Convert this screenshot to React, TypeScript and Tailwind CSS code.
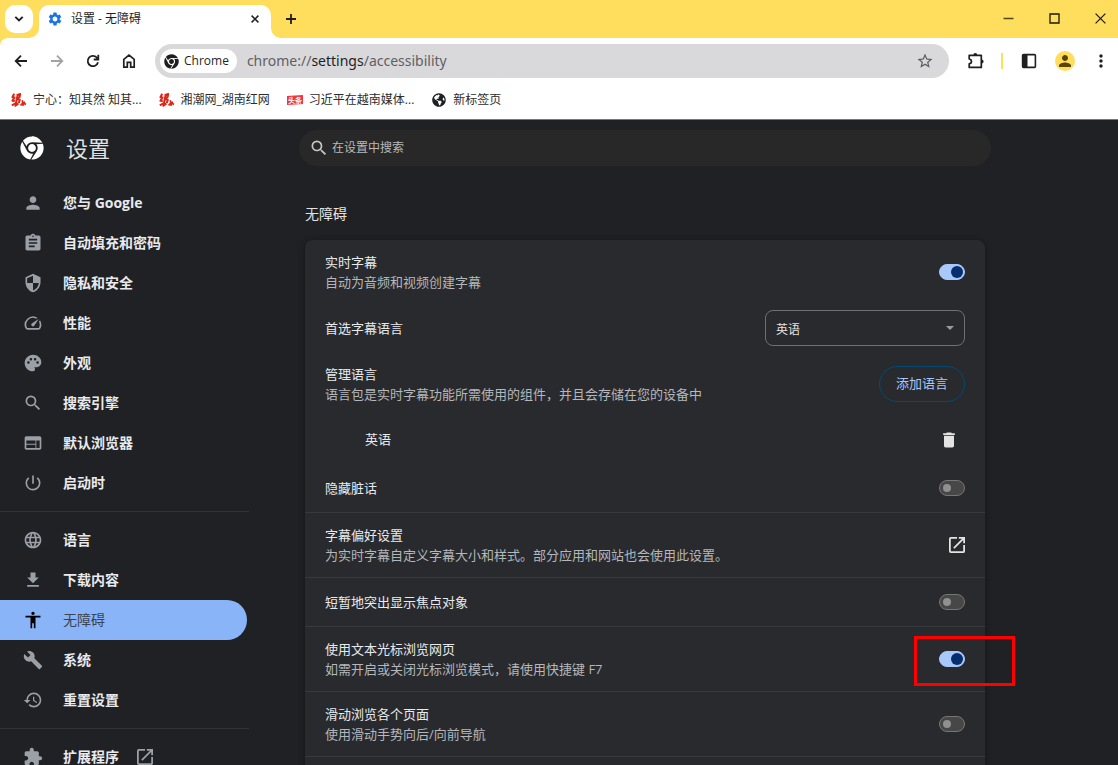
import type { ReactNode } from 'react';
import type { IconType } from 'react-icons';
import { FaChrome, FaGlobeAmericas } from 'react-icons/fa';
import {
  MdAccessibility,
  MdAssignment,
  MdBuild,
  MdDelete,
  MdExtension,
  MdFileDownload,
  MdHistory,
  MdLanguage,
  MdMoreVert,
  MdPalette,
  MdPerson,
  MdPowerSettingsNew,
  MdSearch,
  MdSecurity,
  MdSettings,
  MdSpeed,
  MdStarBorder,
  MdWeb,
} from 'react-icons/md';

type NavItem = { label: string; icon: IconType; active?: boolean; external?: boolean };

const navGroups: NavItem[][] = [
  [
    { label: '您与 Google', icon: MdPerson },
    { label: '自动填充和密码', icon: MdAssignment },
    { label: '隐私和安全', icon: MdSecurity },
    { label: '性能', icon: MdSpeed },
    { label: '外观', icon: MdPalette },
    { label: '搜索引擎', icon: MdSearch },
    { label: '默认浏览器', icon: MdWeb },
    { label: '启动时', icon: MdPowerSettingsNew },
  ],
  [
    { label: '语言', icon: MdLanguage },
    { label: '下载内容', icon: MdFileDownload },
    { label: '无障碍', icon: MdAccessibility, active: true },
    { label: '系统', icon: MdBuild },
    { label: '重置设置', icon: MdHistory },
  ],
  [{ label: '扩展程序', icon: MdExtension, external: true }],
];

function LaunchIcon({ className }: { className: string }) {
  return (
    <svg viewBox="3 3 18 18" className={className} fill="currentColor" aria-hidden="true">
      <path d="M19 19H5V5h7V3H5a2 2 0 0 0-2 2v14a2 2 0 0 0 2 2h14c1.1 0 2-.9 2-2v-7h-2v7zM14 3v2h3.590l-9.830 9.830 1.410 1.410L19 6.410V10h2V3h-7z" />
    </svg>
  );
}

function RedNetIcon() {
  return (
    <svg viewBox="0 0 16 14" className="h-3.5 w-4" fill="none" stroke="#dd2618" strokeLinejoin="round" aria-hidden="true">
      <path d="M3.200 .8 1.400 4.200l2.200.2L1.400 7.800l2.400.2M.8 12.400l3.600-2" strokeWidth="2" />
      <path d="M5.600 2.200 9.200 1 8.600 4 6 6.200l2.800.6-1 3.200M6.600 2.200 4.400 12.800l3-2.400" strokeWidth="2" />
      <path d="M9.600 12.600l1.600-2.200M11.200 7.200l.6 2.800 2.200-1M11.800 10l3.200 1.400M11.800 10l.4 2.800" strokeWidth="1.700" />
    </svg>
  );
}

function TabStrip() {
  return (
    <div className="flex h-[38px] items-start bg-[#ffdd5d] pt-[5px] text-[#1f1f1f]">
      <button aria-label="搜索标签页" className="ml-[5px] flex h-7 w-7 items-center justify-center rounded-[10px] bg-white">
        <svg viewBox="0 0 10 6" className="h-1.5 w-2.5" fill="none" stroke="currentColor" strokeWidth="1.900">
          <path d="M1.300 .8 5 4.500 8.700 .8" />
        </svg>
      </button>
      <div className="relative ml-1.5 flex h-[33px] w-[232px] items-center rounded-t-[10px] bg-white pr-2.5 pb-1.5 pl-2">
        <svg viewBox="0 0 10 10" className="absolute bottom-0 -left-2.5 size-2.5" fill="#fff">
          <path d="M10 0v10H0A10 10 0 0 0 10 0z" />
        </svg>
        <svg viewBox="0 0 10 10" className="absolute -right-2.5 bottom-0 size-2.5" fill="#fff">
          <path d="M0 0v10h10A10 10 0 0 1 0 0z" />
        </svg>
        <MdSettings className="size-4 text-[#1a73e8]" />
        <span className="ml-2 flex-1 text-xs">设置 - 无障碍</span>
        <button aria-label="关闭标签页" className="p-0.5">
          <svg viewBox="0 0 8 8" className="size-2" stroke="currentColor" strokeWidth="1.500">
            <path d="M.6 .6l6.800 6.800M7.400 .6.6 7.400" />
          </svg>
        </button>
      </div>
      <button aria-label="新标签页" className="ml-[14px] flex h-7 items-center">
        <svg viewBox="0 0 12 12" className="size-3" stroke="currentColor" strokeWidth="1.800">
          <path d="M6 1v10M1 6h10" />
        </svg>
      </button>
      <div className="ml-auto flex h-[26px] items-center gap-[35px] pr-3">
        <button aria-label="最小化">
          <svg viewBox="0 0 11 11" className="size-[11px]" stroke="#4f461f" strokeWidth="1.500">
            <path d="M.5 5.500h10" />
          </svg>
        </button>
        <button aria-label="最大化">
          <svg viewBox="0 0 11 11" className="size-[11px]" fill="none" stroke="#1a1708" strokeWidth="1.300">
            <path d="M1 1h9v9H1z" />
          </svg>
        </button>
        <button aria-label="关闭">
          <svg viewBox="0 0 11 11" className="size-[11px]" stroke="#1a1708" strokeWidth="1.200">
            <path d="M.6 .6l9.800 9.800M10.400 .6.6 10.400" />
          </svg>
        </button>
      </div>
    </div>
  );
}

function Toolbar() {
  return (
    <div className="flex h-[46px] items-center pr-[7px] pl-[13px] text-[#1f1f1f]">
      <div className="flex gap-5">
        <button aria-label="后退">
          <svg viewBox="0 0 16 16" className="size-4" fill="none" stroke="currentColor" strokeWidth="1.800">
            <path d="M14 8H3M8 2.700 2.700 8 8 13.300" />
          </svg>
        </button>
        <button aria-label="前进" disabled className="text-[#a3a3a3]">
          <svg viewBox="0 0 16 16" className="size-4" fill="none" stroke="currentColor" strokeWidth="1.800">
            <path d="M2 8h11M8 2.700 13.300 8 8 13.300" />
          </svg>
        </button>
        <button aria-label="重新加载">
          <svg viewBox="0 0 16 16" className="size-4" fill="none" stroke="currentColor" strokeWidth="1.800">
            <path d="M13 9.200A5.200 5.200 0 1 1 12.200 5L13.200 6.200M13.300 1.800v4.700H8.700" />
          </svg>
        </button>
        <button aria-label="主页">
          <svg viewBox="0 0 16 16" className="size-4" fill="none" stroke="currentColor" strokeWidth="1.700">
            <path d="M2.800 6.300 8 2.200l5.200 4.100v7.900H9.700V9.300H6.300v4.900H2.800z" />
          </svg>
        </button>
      </div>
      <div className="ml-[18px] flex h-[34px] flex-1 items-center rounded-full bg-[#d9d9db] pr-[15px] pl-[5px]">
        <span className="flex h-6 items-center gap-[5px] rounded-full bg-white pr-2 pl-1 text-xs">
          <FaChrome className="size-[15px]" />
          Chrome
        </span>
        <p className="ml-2.5 flex-1 font-['Noto_Sans',sans-serif] text-sm text-[#5f6063]">
          chrome://<span className="text-[#1f1f1f]">settings</span>/accessibility
        </p>
        <button aria-label="为此标签页添加书签">
          <MdStarBorder className="size-[18px] text-[#5a5b5e]" />
        </button>
      </div>
      <div className="ml-[18px] flex items-center">
        <button aria-label="扩展程序">
          <svg viewBox="0 0 18 18" className="size-[18px]" fill="none" stroke="currentColor" strokeWidth="1.700" strokeLinejoin="round">
            <path d="M2.200 3.300H14.300V15.400H2.200V11.800C5.200 11.200 5.200 7.600 2.200 7z" />
            <path d="M6.300 3a2 2 0 0 1 4 0zM14.600 7.500a2 2 0 0 1 0 4z" fill="currentColor" stroke="none" />
          </svg>
        </button>
        <span className="ml-4 h-4 w-0.5 bg-[#ffdd5d]" />
        <button aria-label="侧边栏" className="ml-[18px]">
          <svg viewBox="0 0 16 16" className="size-4" fill="none" stroke="currentColor" strokeWidth="1.600">
            <rect x="1.600" y="1.600" width="12.800" height="12.800" rx="1" />
            <path d="M2 2h4.500v12H2z" fill="currentColor" stroke="none" />
          </svg>
        </button>
        <button aria-label="个人资料" className="ml-[18px] flex size-5 items-center justify-center rounded-full bg-[#ffdd5d] text-[#5a4500]">
          <MdPerson className="size-[18px]" />
        </button>
        <button aria-label="更多" className="ml-4">
          <MdMoreVert className="size-5" />
        </button>
      </div>
    </div>
  );
}

function Bookmark({ icon, children }: { icon: ReactNode; children: ReactNode }) {
  return (
    <a href="#bookmark" className="flex items-center gap-1.5">
      <span className="flex w-4 justify-center">{icon}</span>
      {children}
    </a>
  );
}

function BookmarksBar() {
  return (
    <div className="flex h-9 items-center gap-[17px] border-b border-[#77787a] pb-1 pl-[11px] text-xs whitespace-nowrap text-[#2c2c2e]">
      <Bookmark icon={<RedNetIcon />}>宁心：知其然 知其...</Bookmark>
      <Bookmark icon={<RedNetIcon />}>湘潮网_湖南红网</Bookmark>
      <Bookmark
        icon={
          <svg viewBox="0 0 16 10" className="h-2.5 w-4" aria-hidden="true">
            <path d="M0 1 16 0v9L0 10z" fill="#f5333d" />
            <text x="8" y="7.600" fontSize="7" fontWeight="700" textAnchor="middle" fill="#fff">
              头条
            </text>
          </svg>
        }
      >
        习近平在越南媒体...
      </Bookmark>
      <Bookmark icon={<FaGlobeAmericas className="size-3.5 text-[#1f2023]" />}>新标签页</Bookmark>
    </div>
  );
}

function Sidebar() {
  return (
    <aside className="w-[249px] shrink-0">
      <div className="flex h-14 items-center pl-5">
        <FaChrome className="size-6 text-white" />
        <h1 className="ml-[22px] text-[22px] text-[#dfe1e5]">设置</h1>
      </div>
      <nav className="pt-[7px]">
        {navGroups.map((group, i) => (
          <div key={i} className={i > 0 ? 'mt-2 border-t border-[#333437] pt-2' : ''}>
            {group.map(({ label, icon: Icon, active, external }) => (
              <a
                key={label}
                href={`#${label}`}
                className={
                  active
                    ? 'mr-0.5 flex h-10 items-center rounded-r-full bg-[#8ab4f8] pl-[23px] text-sm text-[#3a4455]'
                    : 'mr-0.5 flex h-10 items-center pl-[23px] text-sm font-bold text-[#e8eaed]'
                }
              >
                <Icon className={active ? 'size-5 text-black' : 'size-5 text-[#9aa0a6]'} />
                <span className="ml-5">{label}</span>
                {external && <LaunchIcon className="ml-[18px] size-4 text-[#9aa0a6]" />}
              </a>
            ))}
          </div>
        ))}
      </nav>
    </aside>
  );
}

function Toggle({ label, on }: { label: string; on?: boolean }) {
  return (
    <input
      type="checkbox"
      role="switch"
      aria-label={label}
      defaultChecked={on}
      className="flex h-4 w-[26px] shrink-0 appearance-none items-center rounded-full border border-[#757775] bg-[#474747] px-[3px] before:size-2 before:rounded-full before:bg-[#8f918f] checked:justify-end checked:border-[#a8c7fa] checked:bg-[#a8c7fa] checked:px-px checked:before:size-3 checked:before:bg-[#062e6f]"
    />
  );
}

type RowProps = { title: string; sub?: string; divider?: boolean; children: ReactNode };

function Row({ title, sub, divider, children }: RowProps) {
  return (
    <div className={divider ? 'relative border-t border-[#38393c]' : 'relative'}>
      <div className={sub ? 'flex h-16 items-center px-5' : 'flex h-12 items-center px-5'}>
        <div className="flex-1 text-[13px] leading-5">
          <div className="text-[#e8eaed]">{title}</div>
          {sub && <div className="text-[#b4b7bc]">{sub}</div>}
        </div>
        {children}
      </div>
    </div>
  );
}

function AccessibilityPage() {
  return (
    <main className="ml-[50px] min-w-0 max-w-[692px] flex-1 pt-2.5">
      <label className="flex h-9 items-center rounded-full bg-[#282828] pl-2.5">
        <MdSearch className="size-5 text-[#c4c7c5]" />
        <input
          type="search"
          aria-label="在设置中搜索"
          placeholder="在设置中搜索"
          className="ml-[3px] flex-1 bg-transparent text-xs outline-none placeholder:text-[#b8bab9]"
        />
      </label>
      <section className="px-1.5 pt-[38px]">
        <h2 className="pb-4 text-sm leading-5 text-[#e3e3e3]">无障碍</h2>
        <div className="rounded-lg bg-[#292a2d] shadow-[0_1px_6px_rgba(0,0,0,0.4)]">
          <Row title="实时字幕" sub="自动为音频和视频创建字幕">
            <Toggle label="实时字幕" on />
          </Row>
          <Row title="首选字幕语言">
            <div className="relative">
              <select
                aria-label="首选字幕语言"
                className="h-9 w-[200px] appearance-none rounded-lg border border-[#6d6f70] bg-transparent px-2.5 pt-1 text-xs text-[#e3e3e3]"
              >
                <option>英语</option>
              </select>
              <svg viewBox="0 0 8 4" className="pointer-events-none absolute top-4 right-[11px] h-1 w-2" fill="#9a9c9b">
                <path d="M0 0h8L4 4z" />
              </svg>
            </div>
          </Row>
          <Row title="管理语言" sub="语言包是实时字幕功能所需使用的组件，并且会存储在您的设备中">
            <button className="h-9 rounded-full border border-[#004a77] px-4 text-[13px] text-[#a8c7fa]">添加语言</button>
          </Row>
          <div className="flex h-12 items-center pr-[26px] pl-[60px] text-[13px] text-[#e8eaed]">
            <span className="flex-1">英语</span>
            <button aria-label="移除英语">
              <MdDelete className="size-5 text-[#e3e3e3]" />
            </button>
          </div>
          <Row title="隐藏脏话">
            <Toggle label="隐藏脏话" />
          </Row>
          <Row title="字幕偏好设置" sub="为实时字幕自定义字幕大小和样式。部分应用和网站也会使用此设置。" divider>
            <a href="#captions" aria-label="字幕偏好设置">
              <LaunchIcon className="size-4 text-[#e3e3e3]" />
            </a>
          </Row>
          <Row title="短暂地突出显示焦点对象" divider>
            <Toggle label="短暂地突出显示焦点对象" />
          </Row>
          <Row title="使用文本光标浏览网页" sub="如需开启或关闭光标浏览模式，请使用快捷键 F7" divider>
            <Toggle label="使用文本光标浏览网页" on />
            <div className="pointer-events-none absolute top-[9px] -right-[30px] h-[50px] w-[101px] border-3 border-[#fe0000]" />
          </Row>
          <Row title="滑动浏览各个页面" sub="使用滑动手势向后/向前导航" divider>
            <Toggle label="滑动浏览各个页面" />
          </Row>
          <div className="h-12 border-t border-[#38393c]" />
        </div>
      </section>
    </main>
  );
}

export default function App() {
  return (
    <div className="flex h-screen flex-col overflow-hidden bg-[#202124] font-['Open_Sans','Noto_Sans_CJK_SC',sans-serif]">
      <header className="shrink-0 bg-[#ffdd5d]">
        <TabStrip />
        <div className="rounded-tl-lg bg-white">
          <Toolbar />
          <BookmarksBar />
        </div>
      </header>
      <div className="flex min-h-0 flex-1 overflow-hidden">
        <Sidebar />
        <AccessibilityPage />
      </div>
    </div>
  );
}
